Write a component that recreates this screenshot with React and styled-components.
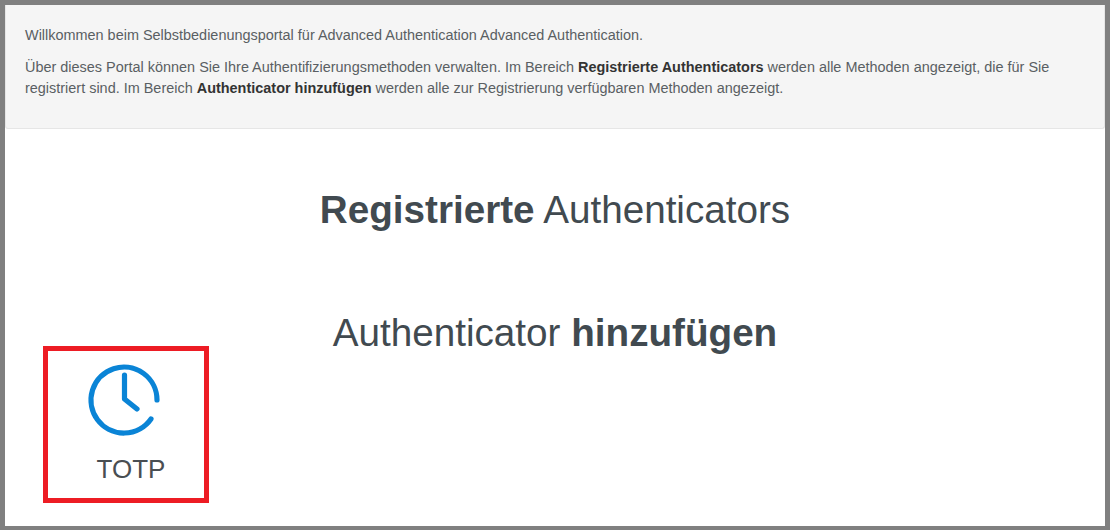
import React from 'react';
import styled, { createGlobalStyle } from 'styled-components';

const GlobalStyle = createGlobalStyle`
  html, body {
    margin: 0;
    padding: 0;
    background: #fff;
  }
  body {
    font-family: "Liberation Sans", Arial, sans-serif;
  }
`;

const Frame = styled.div`
  box-sizing: border-box;
  width: 1110px;
  height: 530px;
  border-style: solid;
  border-color: #808080;
  border-width: 5px 5px 4px 5px;
  background: #fff;
  overflow: hidden;
`;

const Welcome = styled.div`
  box-sizing: border-box;
  height: 124px;
  padding: 20px 19px 0;
  background: #f5f5f5;
  border: 1px solid #e6e6e6;
  border-top: 0;
  border-radius: 0 0 3px 3px;
  font-size: 14.44px;
  line-height: 21px;
  color: #5a5f63;
`;

const Para = styled.p`
  margin: 0 0 11px;
  b {
    color: #333;
  }
`;

const Heading = styled.h2`
  margin: ${(p) => p.$top}px 0 0;
  text-align: center;
  font-size: 38.65px;
  line-height: 26px;
  font-weight: 400;
  color: #414a50;
`;

const MethodBox = styled.div`
  box-sizing: border-box;
  width: 166px;
  height: 157px;
  margin: 0 0 0 38px;
  border: 5px solid #ed1c24;
  display: flex;
  flex-direction: column;
  align-items: center;
  padding-top: 6px;
`;

const ClockIcon = styled.svg`
  display: block;
  width: 80px;
  height: 80px;
  margin-left: -3px;
`;

const MethodLabel = styled.div`
  margin-top: 17px;
  margin-left: 10px;
  font-size: 26px;
  line-height: 30px;
  color: #494e52;
`;

export default function App() {
  return (
    <>
      <GlobalStyle />
      <Frame>
        <Welcome>
          <Para>Willkommen beim Selbstbedienungsportal für Advanced Authentication Advanced Authentication.</Para>
          <Para>
            Über dieses Portal können Sie Ihre Authentifizierungsmethoden verwalten. Im Bereich{' '}
            <b>Registrierte Authenticators</b> werden alle Methoden angezeigt, die für Sie registriert sind. Im Bereich{' '}
            <b>Authenticator hinzufügen</b> werden alle zur Registrierung verfügbaren Methoden angezeigt.
          </Para>
        </Welcome>
        <Heading $top={68}><b>Registrierte</b> Authenticators</Heading>
        <Heading $top={97}>Authenticator <b>hinzufügen</b></Heading>
        <MethodBox>
          <ClockIcon viewBox="0 0 80 80" fill="none" stroke="#0a84d6" strokeWidth="5.2" strokeLinecap="round" strokeLinejoin="round">
            <path d="M72 43 A33 33 0 1 0 66 62" />
            <path d="M39.5 18 V42 L52 52" />
          </ClockIcon>
          <MethodLabel>TOTP</MethodLabel>
        </MethodBox>
      </Frame>
    </>
  );
}
